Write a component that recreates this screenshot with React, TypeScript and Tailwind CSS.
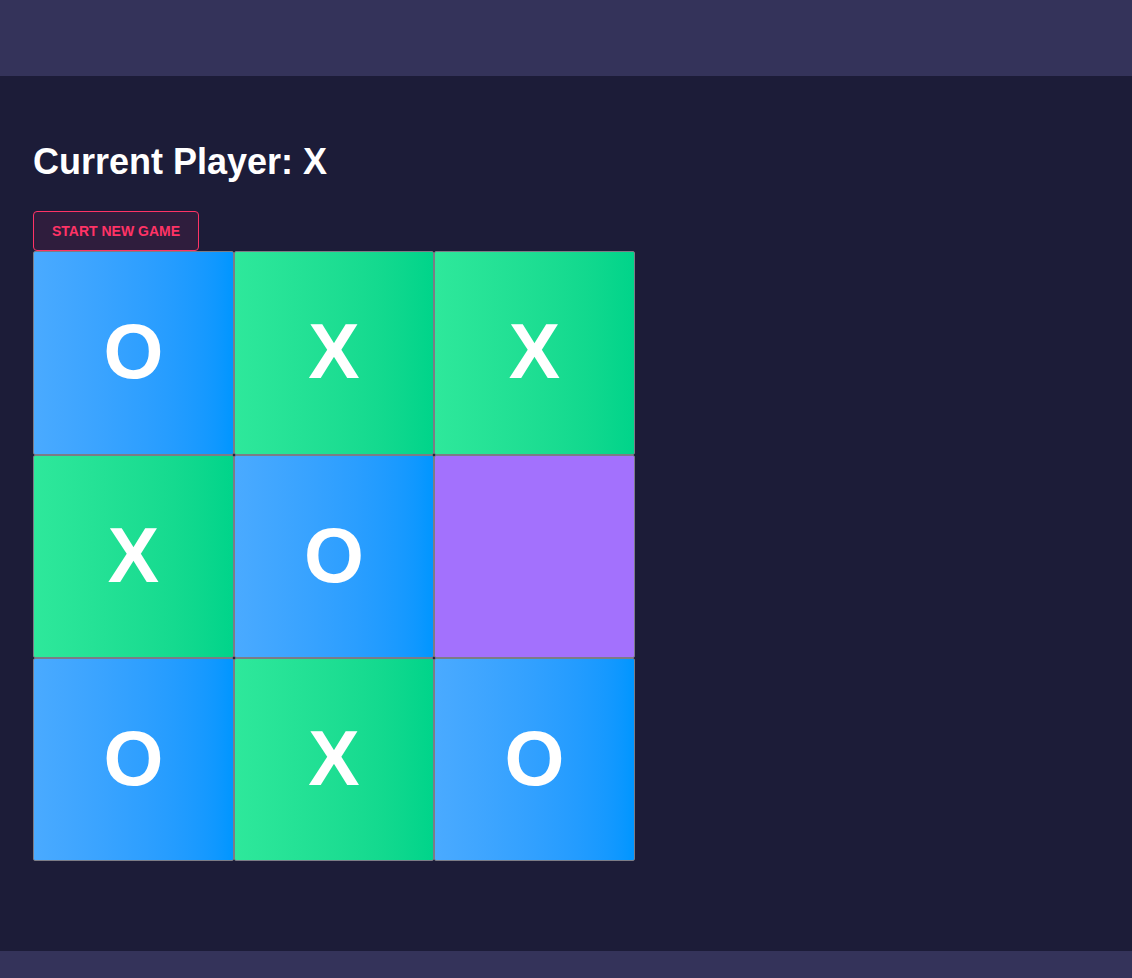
import React, { useState } from "react";

type Mark = "X" | "O" | null;

// ── Board state as shown ──────────────────────────────────────────────────────
const INITIAL: Mark[] = ["O", "X", "X", "X", "O", null, "O", "X", "O"];

function Cell({ value, onClick }: { value: Mark; onClick: () => void }) {
  const bg =
    value === "O"
      ? "bg-linear-to-r from-[#4aaaff] to-[#0096ff]"
      : value === "X"
        ? "bg-linear-to-r from-[#2ee89b] to-[#00d48a]"
        : "bg-[#a371fd]";
  return (
    <button
      type="button"
      onClick={onClick}
      className={`flex items-center justify-center pb-[3px] border border-[#7c7c86] rounded-[2px] text-white font-bold text-[77px] leading-none ${bg}`}
    >
      {value}
    </button>
  );
}

export default function App() {
  const [board, setBoard] = useState<Mark[]>(INITIAL);
  const [player, setPlayer] = useState<"X" | "O">("X");

  const play = (i: number) => {
    if (board[i]) return;
    const next = board.slice();
    next[i] = player;
    setBoard(next);
    setPlayer(player === "X" ? "O" : "X");
  };

  const reset = () => {
    setBoard(Array(9).fill(null));
    setPlayer("X");
  };

  return (
    <div
      className="min-h-screen flex flex-col bg-[#1c1c38] text-white"
      style={{ fontFamily: '"Liberation Sans", Arial, sans-serif' }}
    >
      <header className="h-[76px] shrink-0 bg-[#34335a]" />

      <main className="flex-1 px-[33px] pt-[66px]">
        <h1 className="text-4xl font-bold leading-10 mb-[29px]">
          Current Player: {player}
        </h1>

        <button
          type="button"
          onClick={reset}
          className="h-10 px-[18px] rounded-[4px] border border-[#ff3366] bg-[#2f1d3d] text-[#ff3366] text-sm font-bold"
        >
          START NEW GAME
        </button>

        <div className="grid grid-cols-[201px_200px_201px] grid-rows-[204px_203px_203px] w-fit">
          {board.map((v, i) => (
            <Cell key={i} value={v} onClick={() => play(i)} />
          ))}
        </div>
      </main>

      <footer className="h-[27px] shrink-0 bg-[#34335a]" />
    </div>
  );
}
